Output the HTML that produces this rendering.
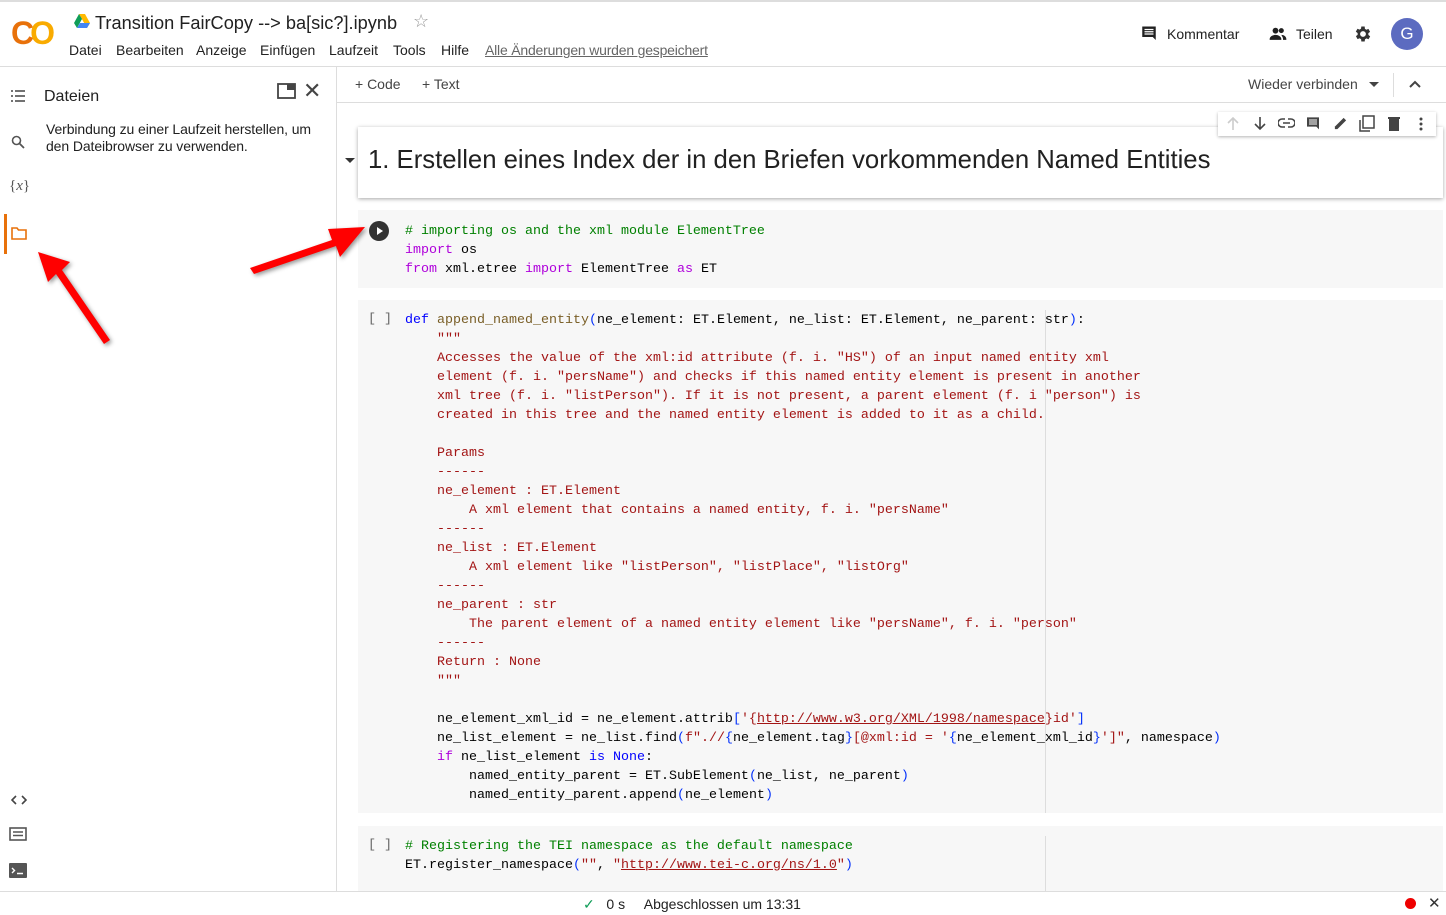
<!DOCTYPE html>
<html><head><meta charset="utf-8"><style>
*{box-sizing:border-box;margin:0;padding:0}
body{width:1446px;height:915px;overflow:hidden;background:#fff;font-family:"Liberation Sans",sans-serif;color:#212121;position:relative}
.a{position:absolute}
.m{position:absolute;top:42px;font-size:14px}
.code{font-family:"Liberation Mono",monospace;font-size:13.33px;line-height:19px;white-space:pre;color:#000}
.cm{color:#008000}.kw{color:#af00db}.bl{color:#0000ff}.fn{color:#795e26}.st{color:#a31515}.pr{color:#0431fa}.ul{text-decoration:underline;text-decoration-color:#a31515}
.cell{position:absolute;left:358px;right:3px;background:#f7f7f7}
.br{position:absolute;left:368px;font-family:"Liberation Mono",monospace;font-size:13.33px;color:#666}
</style></head><body>
<div class="a" style="left:0;top:0;width:1446px;height:2px;background:#ddd"></div>
<div class="a" style="left:11px;top:15px;font-weight:bold;font-size:32px;letter-spacing:-4px;line-height:36px"><span style="color:#e8710a">C</span><span style="color:#f9ab00">O</span></div>
<svg class="a" style="left:74px;top:14px" width="16" height="14" viewBox="0 0 16 14"><polygon points="5,0 11,0 16,9 13,14" fill="#ffba00"/><polygon points="5,0 0,9 3,14 8,5" fill="#0f9d58"/><polygon points="3,14 13,14 16,9 6,9" fill="#4285f4"/></svg>
<div class="a" style="left:95px;top:13px;font-size:18.2px;color:#212121">Transition FairCopy --&gt; ba[sic?].ipynb</div>
<div class="a" style="left:413px;top:11px;font-size:18px;color:#999">☆</div>
<div class="m" style="left:69px">Datei</div>
<div class="m" style="left:116px">Bearbeiten</div>
<div class="m" style="left:196px">Anzeige</div>
<div class="m" style="left:260px">Einfügen</div>
<div class="m" style="left:329px">Laufzeit</div>
<div class="m" style="left:393px">Tools</div>
<div class="m" style="left:441px">Hilfe</div>
<div class="m" style="left:485px;color:#666;text-decoration:underline;letter-spacing:-0.2px">Alle Änderungen wurden gespeichert</div>
<svg class="a" style="left:1140px;top:25px" width="18" height="18" viewBox="0 0 24 24"><path d="M21 2H3v14h14l4 4z" fill="#212121"/><path d="M6 6h12M6 9h12M6 12h12" stroke="#fff" stroke-width="1.6"/></svg>
<div class="a" style="left:1167px;top:26px;font-size:14px">Kommentar</div>
<svg class="a" style="left:1267px;top:24px" width="22" height="20" viewBox="0 0 24 24"><circle cx="9" cy="8" r="3.5" fill="#212121"/><circle cx="16" cy="8" r="3" fill="#212121"/><path d="M2 18c0-3 4-5 7-5s7 2 7 5v1H2zM16 13c3 0 6 2 6 5v1h-4v-1c0-2-1-3-2-5z" fill="#212121"/></svg>
<div class="a" style="left:1296px;top:26px;font-size:14px">Teilen</div>
<svg class="a" style="left:1353px;top:24px" width="20" height="20" viewBox="0 0 24 24"><path fill="#333" d="M19.4 13a7.5 7.5 0 000-2l2.1-1.6-2-3.5-2.5 1a7 7 0 00-1.7-1L15 3h-4l-.4 2.7a7 7 0 00-1.7 1l-2.5-1-2 3.5L6.6 11a7.5 7.5 0 000 2l-2.1 1.6 2 3.5 2.5-1a7 7 0 001.7 1L11 21h4l.4-2.7a7 7 0 001.7-1l2.5 1 2-3.5zM13 15.5a3.5 3.5 0 110-7 3.5 3.5 0 010 7z" transform="translate(-1 0)"/></svg>
<div class="a" style="left:1391px;top:18px;width:32px;height:32px;border-radius:50%;background:#5c6bc0;color:#fff;font-size:17px;text-align:center;line-height:32px">G</div>
<div class="a" style="left:0;top:66px;width:1446px;height:1px;background:#ddd"></div>
<div class="a" style="left:336px;top:67px;width:1px;height:824px;background:#ddd"></div>
<svg class="a" style="left:10px;top:89px" width="16" height="14" viewBox="0 0 16 14"><path d="M1 2h2M5 2h10M1 7h2M5 7h10M1 12h2M5 12h10" stroke="#444" stroke-width="1.5"/></svg>
<div class="a" style="left:44px;top:88px;font-size:16px">Dateien</div>
<svg class="a" style="left:277px;top:83px" width="19" height="16" viewBox="0 0 19 16"><rect x="1" y="1" width="17" height="14" fill="none" stroke="#444" stroke-width="1.8"/><rect x="10" y="1" width="8" height="6" fill="#444"/></svg>
<div class="a" style="left:303px;top:78px;font-size:22px;color:#444">✕</div>
<svg class="a" style="left:11px;top:135px" width="14" height="14" viewBox="0 0 14 14"><circle cx="5.5" cy="5.5" r="4" fill="none" stroke="#555" stroke-width="1.6"/><path d="M8.5 8.5L13 13" stroke="#555" stroke-width="1.8"/></svg>
<div class="a" style="left:46px;top:121px;font-size:14px;line-height:17px;letter-spacing:-0.1px">Verbindung zu einer Laufzeit herstellen, um<br>den Dateibrowser zu verwenden.</div>
<div class="a" style="left:9px;top:178px;font-size:15px;color:#555;font-family:'Liberation Serif',serif">{<i>x</i>}</div>
<div class="a" style="left:4px;top:214px;width:3px;height:40px;background:#e8710a"></div>
<svg class="a" style="left:11px;top:227px" width="16" height="13" viewBox="0 0 16 13"><path d="M1 1h5l1.5 2H15v9H1z" fill="none" stroke="#e8710a" stroke-width="1.6"/></svg>
<svg class="a" style="left:11px;top:795px" width="16" height="10" viewBox="0 0 16 10"><path d="M5 1L1 5l4 4M11 1l4 4-4 4" stroke="#444" stroke-width="1.6" fill="none"/></svg>
<svg class="a" style="left:9px;top:827px" width="18" height="14" viewBox="0 0 18 14"><rect x="1" y="1" width="16" height="12" fill="none" stroke="#555" stroke-width="1.6"/><path d="M4 5h10M4 8.5h10" stroke="#555" stroke-width="1.6"/></svg>
<svg class="a" style="left:9px;top:863px" width="18" height="15" viewBox="0 0 18 15"><rect width="18" height="15" rx="1" fill="#555"/><path d="M3 5l2.5 2.5L3 10M8 10.5h6" stroke="#fff" stroke-width="1.4" fill="none"/></svg>
<div class="a" style="left:355px;top:76px;font-size:14px;color:#444">+ Code</div>
<div class="a" style="left:422px;top:76px;font-size:14px;color:#444">+ Text</div>
<div class="a" style="left:1248px;top:76px;font-size:14px;color:#444">Wieder verbinden</div>
<svg class="a" style="left:1369px;top:82px" width="10" height="6"><path d="M0 0h10L5 5z" fill="#444"/></svg>
<div class="a" style="left:1393px;top:73px;width:1px;height:24px;background:#ddd"></div>
<svg class="a" style="left:1409px;top:80px" width="12" height="8"><path d="M1 7l5-5 5 5" stroke="#444" stroke-width="2" fill="none"/></svg>
<div class="a" style="left:337px;top:102px;width:1109px;height:1px;background:#ddd"></div>
<div class="a" style="left:358px;top:127px;width:1085px;height:71px;background:#fff;box-shadow:0 1px 4px rgba(0,0,0,.35)"></div>
<svg class="a" style="left:345px;top:158px" width="10" height="6"><path d="M0 0h10L5 5z" fill="#333"/></svg>
<div class="a" style="left:368px;top:146px;font-size:25.7px;color:#212121">1. Erstellen eines Index der in den Briefen vorkommenden Named Entities</div>
<div class="a" style="left:1218px;top:112px;width:218px;height:24px;background:#fff;box-shadow:0 1px 3px rgba(0,0,0,.3)"></div>
<svg class="a" style="left:1226px;top:116px" width="14" height="15" viewBox="0 0 14 15"><path d="M7 14V2M2 7l5-5 5 5" stroke="#ccc" stroke-width="1.6" fill="none"/></svg>
<svg class="a" style="left:1253px;top:116px" width="14" height="15" viewBox="0 0 14 15"><path d="M7 1v12M2 8l5 5 5-5" stroke="#444" stroke-width="1.6" fill="none"/></svg>
<svg class="a" style="left:1278px;top:118px" width="17" height="10" viewBox="0 0 17 10"><path d="M7 1H4a4 4 0 000 8h3M10 1h3a4 4 0 010 8h-3M5 5h7" stroke="#444" stroke-width="1.6" fill="none"/></svg>
<svg class="a" style="left:1305px;top:116px" width="16" height="16" viewBox="0 0 24 24"><path d="M21 2H3v14h14l4 4z" fill="#444"/><path d="M6 6h12M6 9h12M6 12h12" stroke="#fff" stroke-width="1.6"/></svg>
<svg class="a" style="left:1333px;top:116px" width="15" height="15" viewBox="0 0 24 24"><path d="M3 21v-4L17 3l4 4L7 21z" fill="#444"/></svg>
<svg class="a" style="left:1359px;top:115px" width="16" height="17" viewBox="0 0 16 17"><rect x="4" y="1" width="11" height="12" fill="none" stroke="#444" stroke-width="1.5"/><path d="M1 5v11h10" stroke="#444" stroke-width="1.5" fill="none"/></svg>
<svg class="a" style="left:1388px;top:116px" width="12" height="15" viewBox="0 0 12 15"><rect x="1" y="3" width="10" height="12" fill="#444"/><rect x="0" y="1" width="12" height="2" fill="#444"/></svg>
<svg class="a" style="left:1419px;top:117px" width="4" height="14"><circle cx="2" cy="2" r="1.5" fill="#444"/><circle cx="2" cy="7" r="1.5" fill="#444"/><circle cx="2" cy="12" r="1.5" fill="#444"/></svg>
<div class="cell" style="top:210px;height:78px"></div>
<div class="a" style="left:369px;top:221px;width:20px;height:20px;border-radius:50%;background:#333"></div>
<svg class="a" style="left:376px;top:227px" width="8" height="8"><path d="M1 0l6 4-6 4z" fill="#fff"/></svg>
<div class="a code" style="left:405px;top:222px"><span class="cm"># importing os and the xml module ElementTree</span>
<span class="kw">import</span> os
<span class="kw">from</span> xml.etree <span class="kw">import</span> ElementTree <span class="kw">as</span> ET</div>
<div class="cell" style="top:300px;height:513px"></div>
<div class="a" style="left:1045px;top:310px;width:1px;height:503px;background:#ddd"></div>
<div class="br" style="top:312px">[ ]</div>
<div class="a code" style="left:405px;top:311px"><span class="bl">def</span> <span class="fn">append_named_entity</span><span class="pr">(</span>ne_element: ET.Element, ne_list: ET.Element, ne_parent: str<span class="pr">)</span>:
<span class="st">    """
    Accesses the value of the xml:id attribute (f. i. "HS") of an input named entity xml
    element (f. i. "persName") and checks if this named entity element is present in another
    xml tree (f. i. "listPerson"). If it is not present, a parent element (f. i "person") is
    created in this tree and the named entity element is added to it as a child.

    Params
    ------
    ne_element : ET.Element
        A xml element that contains a named entity, f. i. "persName"
    ------
    ne_list : ET.Element
        A xml element like "listPerson", "listPlace", "listOrg"
    ------
    ne_parent : str
        The parent element of a named entity element like "persName", f. i. "person"
    ------
    Return : None
    """</span>

    ne_element_xml_id = ne_element.attrib<span class="pr">[</span><span class="st">'{<span class="ul">http://www.w3.org/XML/1998/namespace</span>}id'</span><span class="pr">]</span>
    ne_list_element = ne_list.find<span class="pr">(</span><span class="st">f".//</span><span class="pr">{</span>ne_element.tag<span class="pr">}</span><span class="st">[@xml:id = '</span><span class="pr">{</span>ne_element_xml_id<span class="pr">}</span><span class="st">']"</span>, namespace<span class="pr">)</span>
    <span class="kw">if</span> ne_list_element <span class="bl">is</span> <span class="bl">None</span>:
        named_entity_parent = ET.SubElement<span class="pr">(</span>ne_list, ne_parent<span class="pr">)</span>
        named_entity_parent.append<span class="pr">(</span>ne_element<span class="pr">)</span></div>
<div class="cell" style="top:826px;height:65px"></div>
<div class="a" style="left:1045px;top:836px;width:1px;height:55px;background:#ddd"></div>
<div class="br" style="top:838px">[ ]</div>
<div class="a code" style="left:405px;top:837px"><span class="cm"># Registering the TEI namespace as the default namespace</span>
ET.register_namespace<span class="pr">(</span><span class="st">""</span>, <span class="st">"<span class="ul">http://www.tei-c.org/ns/1.0</span>"</span><span class="pr">)</span></div>
<div class="a" style="left:0;top:891px;width:1446px;height:24px;background:#fff;border-top:1px solid #ddd"></div>
<div class="a" style="left:583px;top:896px;font-size:14px;color:#212121"><span style="color:#0f9d58">✓</span>&nbsp;&nbsp; 0 s&nbsp;&nbsp;&nbsp;&nbsp; Abgeschlossen um 13:31</div>
<div class="a" style="left:1405px;top:898px;width:11px;height:11px;border-radius:50%;background:#e00"></div>
<div class="a" style="left:1428px;top:894px;font-size:15px;color:#333">✕</div>
<svg class="a" style="left:0;top:0;filter:drop-shadow(2px 2px 2px rgba(0,0,0,.4))" width="400" height="360">
<polygon points="38,252 70,262 62,270 110,340 104,344 56,274 48,282" fill="#f00"/>
<polygon points="365,227 340,257 336,246 254,274 250,268 332,240 328,229" fill="#f00"/>
</svg>
</body></html>
